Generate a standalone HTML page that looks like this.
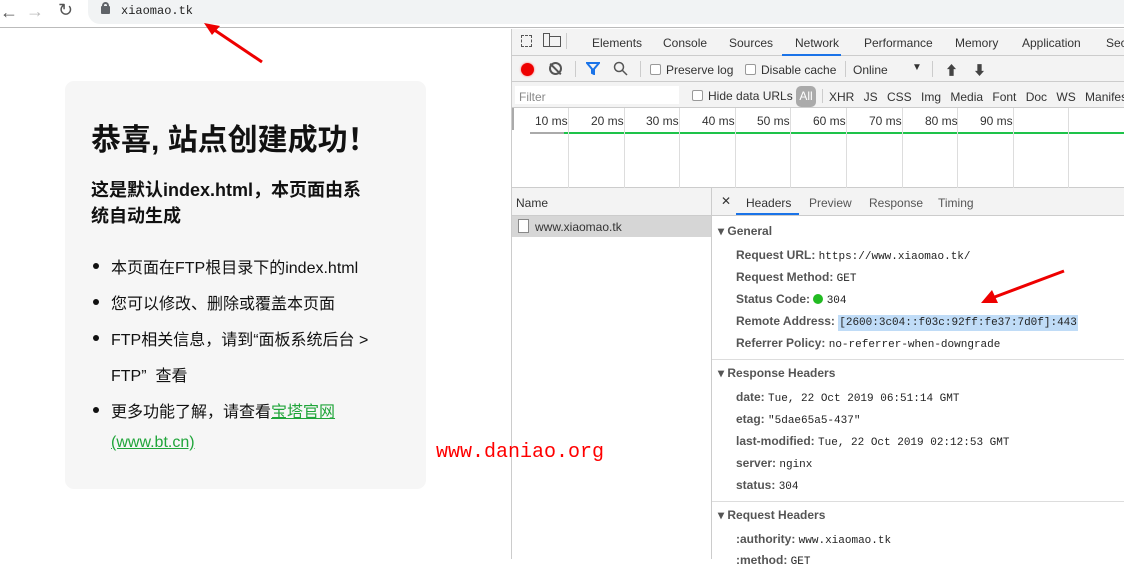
<!DOCTYPE html>
<html><head><meta charset="utf-8"><style>
*{margin:0;padding:0;box-sizing:border-box}
body{width:1124px;height:559px;overflow:hidden;background:#fff;font-family:"Liberation Sans","Noto Sans CJK SC",sans-serif;position:relative}
.a{position:absolute;white-space:nowrap}
.dt{font-size:12px;color:#333}
.mono{font-family:"Liberation Mono","DejaVu Sans Mono",monospace;font-size:11px;color:#222;font-weight:normal}
.k{font-weight:bold;color:#555;font-size:12px}
.cb{display:inline-block;width:11px;height:11px;border:1px solid #999;border-radius:2px;background:#fff;vertical-align:-1px;margin-right:5px}
.li{position:absolute;left:111px;font-size:16px;color:#111;white-space:nowrap}
.bu{position:absolute;left:93px;width:6px;height:6px;border-radius:50%;background:#111}
</style></head><body>
<!-- browser bar -->
<div class="a" style="left:0;top:0;width:1124px;height:28px;background:#fff;border-bottom:1px solid #bbb"></div>
<div class="a" style="left:88px;top:0;width:1040px;height:24px;background:#f1f3f4;border-radius:0 0 0 12px"></div>
<div class="a" style="left:0;top:2px;font-size:18px;color:#555">←</div>
<div class="a" style="left:26px;top:1px;font-size:18px;color:#bbb">→</div>
<div class="a" style="left:58px;top:0;font-size:18px;color:#555">↻</div>
<div class="a" style="left:101px;top:6px;width:9px;height:8px;background:#5f6368;border-radius:1px"></div>
<div class="a" style="left:102px;top:2px;width:7px;height:7px;border:2px solid #5f6368;border-bottom:none;border-radius:4px 4px 0 0"></div>
<div class="a mono" style="left:121px;top:4px;font-size:12px;color:#222">xiaomao.tk</div>
<svg class="a" style="left:200px;top:20px" width="65" height="45"><line x1="62" y1="42" x2="10" y2="7" stroke="#e00" stroke-width="3"/><polygon points="4,3 20,6 12,15" fill="#e00"/></svg>
<!-- card -->
<div class="a" style="left:65px;top:81px;width:361px;height:408px;background:#f6f6f6;border-radius:9px"></div>
<div class="a" style="left:91px;top:115px;font-size:30px;font-weight:bold;color:#111">恭喜, 站点创建成功！</div>
<div class="a" style="left:91px;top:177px;font-size:18px;font-weight:bold;color:#111;line-height:26px">这是默认index.html，本页面由系<br>统自动生成</div>
<div class="bu" style="top:263px"></div><div class="li" style="top:254px">本页面在FTP根目录下的index.html</div>
<div class="bu" style="top:299px"></div><div class="li" style="top:290px">您可以修改、删除或覆盖本页面</div>
<div class="bu" style="top:335px"></div><div class="li" style="top:326px">FTP相关信息，请到“面板系统后台 &gt;</div>
<div class="li" style="top:362px">FTP” &nbsp;查看</div>
<div class="bu" style="top:407px"></div><div class="li" style="top:398px">更多功能了解，请查看<span style="color:#20a53a;text-decoration:underline">宝塔官网</span></div>
<div class="li" style="top:434px;color:#20a53a;text-decoration:underline">(www.bt.cn)</div>
<!-- devtools -->
<div class="a" style="left:511px;top:29px;width:613px;height:530px;background:#fff;border-left:1px solid #ccc"></div>
<div class="a" style="left:512px;top:29px;width:612px;height:27px;background:#f3f3f3;border-bottom:1px solid #ccc"></div>
<div class="a" style="left:521px;top:35px;width:11px;height:12px;border:1px dashed #555"></div>
<div class="a" style="left:543px;top:33px;width:7px;height:14px;border:1px solid #555"></div>
<div class="a" style="left:549px;top:36px;width:12px;height:11px;border:1px solid #555;border-left:none"></div>
<div class="a" style="left:566px;top:33px;width:1px;height:16px;background:#ccc"></div>
<div class="a dt" style="left:592px;top:36px">Elements</div>
<div class="a dt" style="left:663px;top:36px">Console</div>
<div class="a dt" style="left:729px;top:36px">Sources</div>
<div class="a dt" style="left:795px;top:36px">Network</div>
<div class="a" style="left:782px;top:54px;width:59px;height:2px;background:#1a73e8"></div>
<div class="a dt" style="left:864px;top:36px">Performance</div>
<div class="a dt" style="left:955px;top:36px">Memory</div>
<div class="a dt" style="left:1022px;top:36px">Application</div>
<div class="a dt" style="left:1106px;top:36px">Sec</div>
<!-- toolbar -->
<div class="a" style="left:512px;top:56px;width:612px;height:26px;background:#f3f3f3;border-bottom:1px solid #ccc"></div>
<div class="a" style="left:521px;top:63px;width:13px;height:13px;border-radius:50%;background:#e00;box-shadow:0 0 2px #f66"></div>
<div class="a" style="left:549px;top:62px;width:13px;height:13px;border-radius:50%;border:2px solid #555"></div>
<div class="a" style="left:548px;top:68px;width:15px;height:2px;background:#555;transform:rotate(45deg)"></div>
<div class="a" style="left:575px;top:61px;width:1px;height:16px;background:#ccc"></div>
<svg class="a" style="left:586px;top:62px" width="14" height="13"><path d="M1 1H13L8 7V12L6 11V7Z" fill="none" stroke="#1a73e8" stroke-width="2"/></svg>
<svg class="a" style="left:613px;top:61px" width="15" height="15"><circle cx="6" cy="6" r="4.5" fill="none" stroke="#555" stroke-width="1.5"/><line x1="9" y1="9" x2="14" y2="14" stroke="#555" stroke-width="1.5"/></svg>
<div class="a" style="left:640px;top:61px;width:1px;height:16px;background:#ccc"></div>
<div class="a dt" style="left:650px;top:63px"><span class="cb"></span>Preserve log</div>
<div class="a dt" style="left:745px;top:63px"><span class="cb"></span>Disable cache</div>
<div class="a" style="left:845px;top:61px;width:1px;height:16px;background:#ccc"></div>
<div class="a dt" style="left:853px;top:63px">Online</div>
<div class="a dt" style="left:912px;top:62px;font-size:10px">▼</div>
<div class="a" style="left:932px;top:61px;width:1px;height:16px;background:#ccc"></div>
<div class="a dt" style="left:945px;top:60px;font-size:13px;color:#444">⬆</div>
<div class="a dt" style="left:973px;top:60px;font-size:13px;color:#444">⬇</div>
<!-- filter row -->
<div class="a" style="left:512px;top:82px;width:612px;height:26px;background:#f3f3f3;border-bottom:1px solid #ccc"></div>
<div class="a" style="left:515px;top:86px;width:164px;height:18px;background:#fff"></div>
<div class="a dt" style="left:519px;top:90px;color:#888">Filter</div>
<div class="a dt" style="left:692px;top:89px"><span class="cb"></span>Hide data URLs</div>
<div class="a" style="left:796px;top:86px;width:20px;height:21px;background:#aaa;border-radius:5px;color:#fff;font-size:12px;text-align:center;line-height:21px">All</div>
<div class="a" style="left:822px;top:89px;width:1px;height:14px;background:#ccc"></div>
<div class="a dt" style="left:829px;top:90px;word-spacing:6px">XHR JS CSS Img Media Font Doc WS Manifest</div>
<!-- timeline -->
<div class="a" style="left:512px;top:108px;width:612px;height:80px;border-bottom:1px solid #ccc"></div>
<div class="a" style="left:512px;top:108px;width:2px;height:22px;background:#aaa"></div>
<div class="a" style="left:530px;top:132px;width:594px;height:2px;background:#1ec34a"></div>
<div class="a" style="left:530px;top:132px;width:34px;height:2px;background:#aaa"></div>
<div class="a" style="left:568px;top:108px;width:1px;height:80px;background:#ddd"></div>
<div class="a" style="left:624px;top:108px;width:1px;height:80px;background:#ddd"></div>
<div class="a" style="left:679px;top:108px;width:1px;height:80px;background:#ddd"></div>
<div class="a" style="left:735px;top:108px;width:1px;height:80px;background:#ddd"></div>
<div class="a" style="left:790px;top:108px;width:1px;height:80px;background:#ddd"></div>
<div class="a" style="left:846px;top:108px;width:1px;height:80px;background:#ddd"></div>
<div class="a" style="left:902px;top:108px;width:1px;height:80px;background:#ddd"></div>
<div class="a" style="left:957px;top:108px;width:1px;height:80px;background:#ddd"></div>
<div class="a" style="left:1013px;top:108px;width:1px;height:80px;background:#ddd"></div>
<div class="a" style="left:1068px;top:108px;width:1px;height:80px;background:#ddd"></div>
<div class="a dt" style="left:535px;top:114px">10 ms</div>
<div class="a dt" style="left:591px;top:114px">20 ms</div>
<div class="a dt" style="left:646px;top:114px">30 ms</div>
<div class="a dt" style="left:702px;top:114px">40 ms</div>
<div class="a dt" style="left:757px;top:114px">50 ms</div>
<div class="a dt" style="left:813px;top:114px">60 ms</div>
<div class="a dt" style="left:869px;top:114px">70 ms</div>
<div class="a dt" style="left:925px;top:114px">80 ms</div>
<div class="a dt" style="left:980px;top:114px">90 ms</div>
<!-- name column -->
<div class="a" style="left:512px;top:188px;width:200px;height:28px;background:#f3f3f3;border-bottom:1px solid #ccc;border-right:1px solid #ccc"></div>
<div class="a dt" style="left:516px;top:196px">Name</div>
<div class="a" style="left:512px;top:216px;width:199px;height:21px;background:#d6d6d6"></div>
<div class="a" style="left:518px;top:219px;width:11px;height:14px;border:1px solid #888;background:#fff"></div>
<div class="a dt" style="left:535px;top:220px">www.xiaomao.tk</div>
<div class="a" style="left:711px;top:188px;width:1px;height:371px;background:#ccc"></div>
<!-- headers pane -->
<div class="a" style="left:712px;top:188px;width:412px;height:28px;background:#f3f3f3;border-bottom:1px solid #ccc"></div>
<div class="a dt" style="left:721px;top:194px">✕</div>
<div class="a dt" style="left:746px;top:196px">Headers</div>
<div class="a" style="left:736px;top:213px;width:63px;height:2px;background:#1a73e8"></div>
<div class="a dt" style="left:809px;top:196px;color:#555">Preview</div>
<div class="a dt" style="left:869px;top:196px;color:#555">Response</div>
<div class="a dt" style="left:938px;top:196px;color:#555">Timing</div>
<div class="a k" style="left:718px;top:224px">▾ General</div>
<div class="a k" style="left:736px;top:248px">Request URL: <span class="mono">https://www.xiaomao.tk/</span></div>
<div class="a k" style="left:736px;top:270px">Request Method: <span class="mono">GET</span></div>
<div class="a k" style="left:736px;top:292px">Status Code: <span style="display:inline-block;width:10px;height:10px;border-radius:50%;background:#2b2;vertical-align:-1px"></span> <span class="mono">304</span></div>
<div class="a k" style="left:736px;top:314px">Remote Address: <span class="mono" style="background:#c0dcf7;padding:2px 1px">[2600:3c04::f03c:92ff:fe37:7d0f]:443</span></div>
<div class="a k" style="left:736px;top:336px">Referrer Policy: <span class="mono">no-referrer-when-downgrade</span></div>
<svg class="a" style="left:978px;top:268px" width="90" height="40"><line x1="86" y1="3" x2="14" y2="30" stroke="#e00" stroke-width="3"/><polygon points="3,35 14,22 20,35" fill="#e00"/></svg>
<div class="a" style="left:712px;top:359px;width:412px;height:1px;background:#ddd"></div>
<div class="a k" style="left:718px;top:366px">▾ Response Headers</div>
<div class="a k" style="left:736px;top:390px">date: <span class="mono">Tue, 22 Oct 2019 06:51:14 GMT</span></div>
<div class="a k" style="left:736px;top:412px">etag: <span class="mono">"5dae65a5-437"</span></div>
<div class="a k" style="left:736px;top:434px">last-modified: <span class="mono">Tue, 22 Oct 2019 02:12:53 GMT</span></div>
<div class="a k" style="left:736px;top:456px">server: <span class="mono">nginx</span></div>
<div class="a k" style="left:736px;top:478px">status: <span class="mono">304</span></div>
<div class="a" style="left:712px;top:501px;width:412px;height:1px;background:#ddd"></div>
<div class="a k" style="left:718px;top:508px">▾ Request Headers</div>
<div class="a k" style="left:736px;top:532px">:authority: <span class="mono">www.xiaomao.tk</span></div>
<div class="a k" style="left:736px;top:553px">:method: <span class="mono">GET</span></div>
<div class="a mono" style="left:436px;top:441px;font-size:20px;color:#f00;z-index:5">www.daniao.org</div>
</body></html>
